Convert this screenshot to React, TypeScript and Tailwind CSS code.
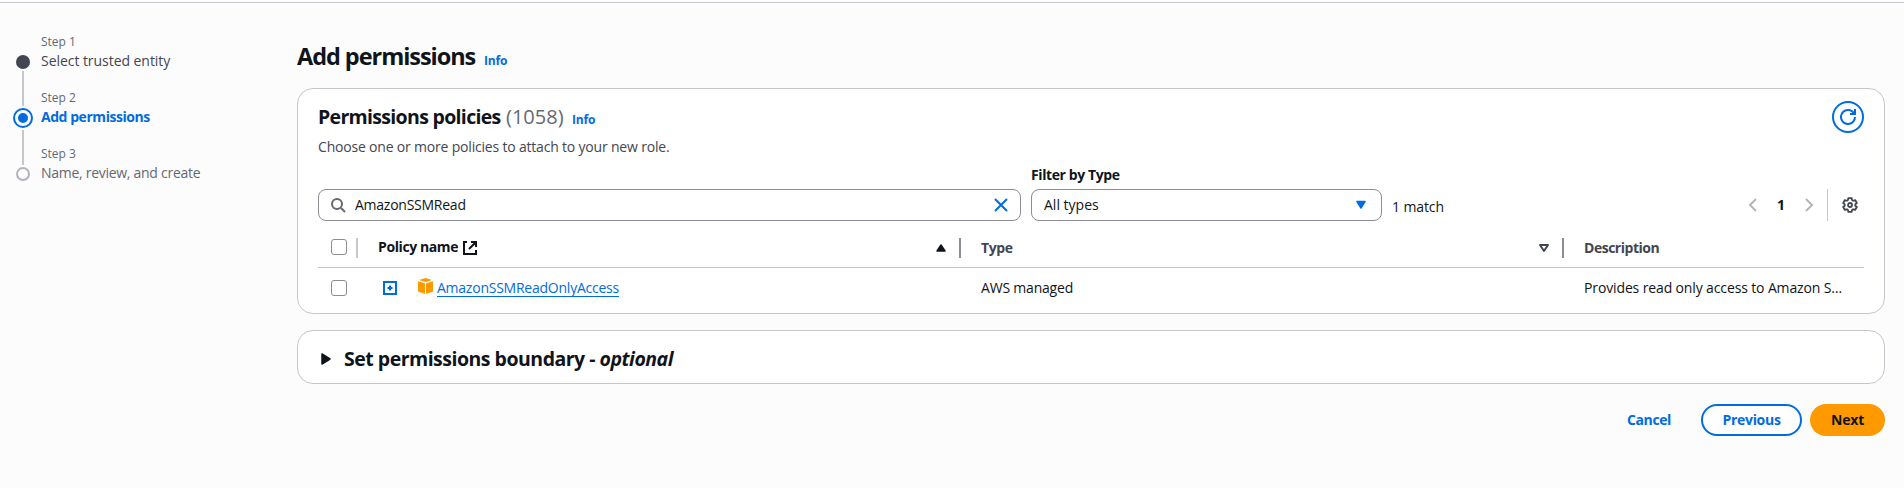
import type { ReactNode } from "react";

function Icon({ children, className = "" }: { children: ReactNode; className?: string }) {
  return (
    <svg viewBox="0 0 16 16" fill="none" stroke="currentColor" strokeWidth="2" className={`size-4 shrink-0 ${className}`}>
      {children}
    </svg>
  );
}

const gearPoints = Array.from({ length: 6 }, (_, i) => {
  const at = (deg: number, r: number) => {
    const a = ((i * 60 - 90 + deg) * Math.PI) / 180;
    return `${(8 + r * Math.cos(a)).toFixed(2)},${(8 + r * Math.sin(a)).toFixed(2)}`;
  };
  return [at(-14, 7.1), at(14, 7.1), at(19, 5.7), at(30, 5.2), at(41, 5.7)].join(" ");
}).join(" ");

function Step({ n, title, state }: { n: number; title: string; state: "done" | "active" | "todo" }) {
  const tone = {
    done: "text-[#424650] tracking-[-0.05px]",
    active: "text-[#006ce0] font-bold tracking-[-0.45px]",
    todo: "text-[#656871] tracking-[-0.28px]",
  }[state];
  return (
    <li className="flex h-14">
      <div className="flex w-[22px] shrink-0 flex-col items-center">
        {state === "done" && (
          <>
            <span className="mt-[21px] size-[14px] shrink-0 rounded-full bg-[#424650]" />
            <span className="mt-[2px] h-[19px] w-0.5 bg-[#c6c6cd]" />
          </>
        )}
        {state === "active" && (
          <>
            <span className="h-[16px] w-0.5 bg-[#c6c6cd]" />
            <span className="mt-[2px] flex size-5 shrink-0 items-center justify-center rounded-full border-2 border-[#006ce0]">
              <span className="size-2.5 rounded-full bg-[#006ce0]" />
            </span>
            <span className="mt-[2px] h-4 w-0.5 bg-[#c6c6cd]" />
          </>
        )}
        {state === "todo" && (
          <>
            <span className="h-[19px] w-0.5 bg-[#c6c6cd]" />
            <span className="mt-[2px] size-[14px] shrink-0 rounded-full border-2 border-[#b4b4bb]" />
          </>
        )}
      </div>
      <div className="ml-[7px] whitespace-nowrap">
        <div className="h-4 text-[12px] leading-4 text-[#656871]">Step {n}</div>
        <div className={`mt-px text-[14px] leading-5 ${tone}`}>{title}</div>
      </div>
    </li>
  );
}

function Info() {
  return <a className="text-[12px] leading-4 font-bold tracking-[-0.2px] text-[#006ce0]">Info</a>;
}

function Checkbox({ className = "" }: { className?: string }) {
  return <span className={`ml-[13px] block size-4 rounded-[3px] border border-[#8c8c94] bg-white ${className}`} />;
}

const columns = "grid grid-cols-[40px_603px_603px_300px] items-center text-[14px] leading-5";

export default function App() {
  return (
    <div className="h-[488px] w-[1904px] overflow-hidden bg-[#fcfcfd] pt-[2px] font-['Open_Sans','Noto_Sans',sans-serif] text-[#0f141a]">
      <div className="flex h-[486px] border-t border-[#c6c6cd]">
        <nav className="w-[297px] shrink-0 pt-[31px] pl-3">
          <ol>
            <Step n={1} title="Select trusted entity" state="done" />
            <Step n={2} title="Add permissions" state="active" />
            <Step n={3} title="Name, review, and create" state="todo" />
          </ol>
        </nav>

        <main className="w-[1588px] shrink-0">
          <div className="flex h-[85px] items-baseline gap-2 pt-[38px]">
            <h1 className="w-[179px] text-[23.5px] leading-[30px] font-bold tracking-[-1.05px] whitespace-nowrap">Add permissions</h1>
            <Info />
          </div>

          <section className="h-[226px] rounded-2xl border border-[#c6c6cd] bg-white px-5 pt-3">
            <div className="flex h-8 justify-between">
              <h2 className="flex items-baseline text-[20px] leading-8 whitespace-nowrap">
                <span className="w-[188px] text-[19.5px] font-bold tracking-[-0.68px]">Permissions policies</span>
                <span className="w-[66px] text-[#656871]">(1058)</span>
                <Info />
              </h2>
              <button className="flex size-8 items-center justify-center rounded-full border-2 border-[#006ce0] text-[#006ce0]">
                <Icon>
                  <path d="M10 5h5V0" />
                  <path d="M15 8a7.03 7.03 0 1 1-7-7 6.93 6.93 0 0 1 6.22 4" />
                </Icon>
              </button>
            </div>
            <p className="mt-1 text-[14px] leading-5 tracking-[-0.19px] text-[#424650]">
              Choose one or more policies to attach to your new role.
            </p>

            <div className="mt-2 flex h-14 items-end">
              <div className="flex h-8 w-[703px] items-center rounded-lg border border-[#8c8c94] bg-white pr-[11px] pl-[11px]">
                <Icon className="text-[#656871]">
                  <circle cx="7" cy="7" r="5" />
                  <path d="m11 11 4 4" />
                </Icon>
                <span className="ml-[9px] flex-1 text-[14px] leading-5 tracking-[-0.25px]">AmazonSSMRead</span>
                <Icon className="text-[#006ce0]">
                  <path d="m2 2 12 12M14 2 2 14" />
                </Icon>
              </div>
              <div className="ml-[10px] w-[351px]">
                <div className="h-6 text-[14px] leading-5 font-bold tracking-[-0.4px]">Filter by Type</div>
                <div className="flex h-8 items-center justify-between rounded-lg border border-[#8c8c94] bg-white px-3">
                  <span className="text-[14px] leading-5">All types</span>
                  <Icon className="text-[#006ce0]">
                    <path d="M4 4.5h8l-4 6.5z" fill="currentColor" strokeWidth="1.5" strokeLinejoin="round" />
                  </Icon>
                </div>
              </div>
              <span className="mb-1 ml-[10px] text-[14px] leading-5 tracking-[-0.1px]">1 match</span>
              <div className="ml-auto flex h-8 items-center">
                <Icon className="text-[#b4b4bb]">
                  <path d="M11 2 5 8l6 6" />
                </Icon>
                <span className="w-10 text-center text-[14px] leading-5 font-bold">1</span>
                <Icon className="text-[#b4b4bb]">
                  <path d="m5 2 6 6-6 6" />
                </Icon>
                <span className="ml-[10px] h-8 w-px bg-[#c6c6cd]" />
                <Icon className="mr-[6px] ml-[14px] text-[#424650]">
                  <polygon points={gearPoints} strokeWidth="1.8" strokeLinejoin="round" />
                  <circle cx="8" cy="8" r="2" strokeWidth="1.8" />
                </Icon>
              </div>
            </div>

            <div className={`${columns} mt-2 h-[39px] border-b border-[#c6c6cd] font-bold text-[#424650]`}>
              <div className="flex h-5 items-center justify-between border-r-2 border-[#c6c6cd]">
                <Checkbox className="mb-0.5" />
              </div>
              <div className="flex h-5 items-center border-r-2 border-[#8c8c94] pr-[10px] pl-5 text-[#0f141a]">
                <span className="mb-0.5 w-[84px] tracking-[-0.4px] whitespace-nowrap">Policy name</span>
                <Icon>
                  <path d="M9 2h5v5M7 9l7-7M14 10v4H2V2h3" />
                </Icon>
                <Icon className="ml-auto">
                  <path d="M4 11h8L8 5z" fill="currentColor" strokeWidth="1.5" strokeLinejoin="round" />
                </Icon>
              </div>
              <div className="flex h-5 items-center justify-between border-r-2 border-[#8c8c94] pr-[10px] pl-5">
                <span className="tracking-[-0.4px]">Type</span>
                <Icon>
                  <path d="M4 5h8l-4 6z" strokeLinejoin="round" />
                </Icon>
              </div>
              <div className="pl-5 tracking-[-0.48px]">Description</div>
            </div>

            <div className={`${columns} h-10`}>
              <Checkbox />
              <div className="flex items-center pl-[24px]">
                <Icon className="text-[#006ce0]">
                  <path d="M2 2h12v12H2zM8 5.5v5M5.5 8h5" />
                </Icon>
                <svg viewBox="0 0 15 16" className="mb-[5px] ml-5 h-4 w-[15px]" fill="#ff9900">
                  <path d="M7.5 0 14 2 7.5 4 1 2z" />
                  <path d="M0 3.2 7 5.3V16L0 13.4zM15 3.2 8 5.3V16l7-2.6z" />
                </svg>
                <a className="ml-1 text-[14px] leading-5 tracking-[-0.24px] text-[#006ce0] underline decoration-1 underline-offset-[3px]">
                  AmazonSSMReadOnlyAccess
                </a>
              </div>
              <div className="pl-5 tracking-[-0.2px]">AWS managed</div>
              <div className="pl-5 tracking-[-0.13px] whitespace-nowrap">Provides read only access to Amazon S…</div>
            </div>
          </section>

          <section className="mt-4 flex h-[54px] items-center rounded-2xl border border-[#c6c6cd] bg-white pl-5">
            <Icon className="mt-[3px]">
              <path d="M4 3v10l8-5z" fill="currentColor" strokeWidth="1.5" strokeLinejoin="round" />
            </Icon>
            <h2 className="mt-1 ml-[10px] text-[19.5px] leading-6 font-bold tracking-[-0.5px] whitespace-nowrap">
              Set permissions boundary - <em>optional</em>
            </h2>
          </section>

          <div className="mt-5 flex justify-end text-[14px] leading-5 font-bold text-[#006ce0]">
            <button className="h-8 w-[101px] pr-[3px] tracking-[-0.4px]">Cancel</button>
            <button className="h-8 w-[101px] rounded-full border-2 border-[#006ce0] bg-white tracking-[-0.3px]">Previous</button>
            <button className="ml-2 h-8 w-[75px] rounded-full bg-[#ff9900] tracking-[-0.2px] text-[#0f141a]">Next</button>
          </div>
        </main>
      </div>
    </div>
  );
}
